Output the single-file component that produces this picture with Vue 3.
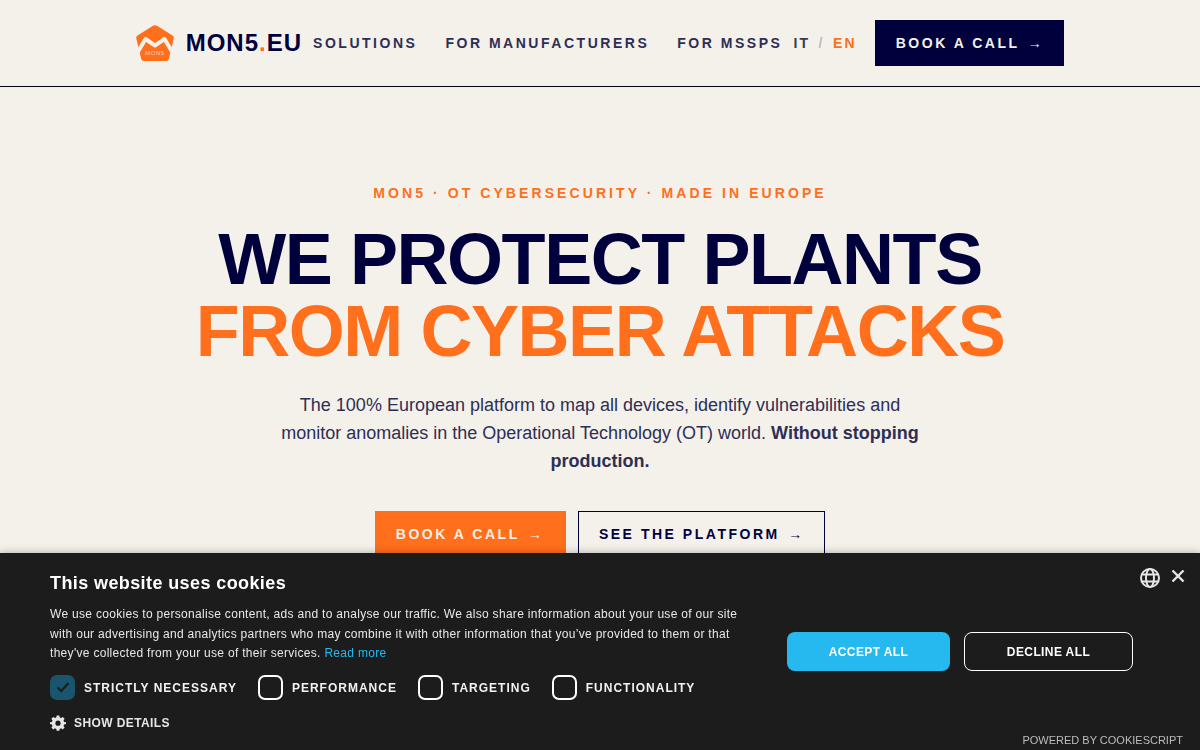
<script setup>
const navLinks = ["Solutions", "For manufacturers", "For MSSPs"];
const categories = [
  { label: "Strictly necessary", checked: true },
  { label: "Performance", checked: false },
  { label: "Targeting", checked: false },
  { label: "Functionality", checked: false },
];
</script>

<template>
  <div class="page">
    <header class="header">
      <a class="logo">
        <svg class="logo_icon" width="38" height="38" viewBox="0 0 38 38">
          <path d="M17 1.8 Q19 0.6 21 1.8 L36.5 11.5 Q38.2 12.6 37.7 14.6 L32.8 35 Q32.3 37 30.3 37 L7.7 37 Q5.7 37 5.2 35 L0.3 14.6 Q-0.2 12.6 1.5 11.5 Z" fill="#ff6f1c" />
          <path d="M0 31 L9.5 15 L19 21.5 L28.5 15 L38 31" fill="none" stroke="#f4f1ea" stroke-width="4" stroke-linejoin="round" />
          <text x="19" y="31" text-anchor="middle" class="logo_mini">MON5</text>
        </svg>
        <span class="logo_text">MON5<span class="dot">.</span>EU</span>
      </a>
      <nav class="nav">
        <a v-for="link in navLinks" :key="link" class="nav_link">{{ link }}</a>
      </nav>
      <div class="lang">
        <span>IT</span><span class="slash">/</span><span class="active">EN</span>
      </div>
      <a class="btn btn_dark btn_header">Book a call <span class="arrow">→</span></a>
    </header>

    <main class="hero">
      <p class="eyebrow">MON5 · OT Cybersecurity · Made in Europe</p>
      <h1 class="title">We protect plants<br /><span class="accent">from cyber attacks</span></h1>
      <p class="lead">
        The 100% European platform to map all devices, identify vulnerabilities and monitor
        anomalies in the Operational Technology (OT) world.
        <strong>Without stopping production.</strong>
      </p>
      <div class="actions">
        <a class="btn btn_orange">Book a call <span class="arrow">→</span></a>
        <a class="btn btn_outline">See the platform <span class="arrow">→</span></a>
      </div>
    </main>

    <section class="cookie">
      <div class="cookie_tools">
        <svg width="22" height="22" viewBox="0 0 22 22" fill="none" stroke="#e6e6e6" stroke-width="2">
          <circle cx="11" cy="11" r="9" />
          <ellipse cx="11" cy="11" rx="4" ry="9" />
          <path d="M2.8 7.6 H19.2 M2.8 14.4 H19.2" />
        </svg>
        <svg class="close" width="14" height="14" viewBox="0 0 14 14" stroke="#e6e6e6" stroke-width="2.4">
          <path d="M1.5 1.5 L12.5 12.5 M12.5 1.5 L1.5 12.5" />
        </svg>
      </div>
      <div class="cookie_main">
        <h2 class="cookie_title">This website uses cookies</h2>
        <p class="cookie_text">
          We use cookies to personalise content, ads and to analyse our traffic. We also share
          information about your use of our site with our advertising and analytics partners who may
          combine it with other information that you’ve provided to them or that they've collected
          from your use of their services. <a class="read_more">Read more</a>
        </p>
        <div class="cookie_checks">
          <label v-for="c in categories" :key="c.label" class="check">
            <span class="box" :class="{ checked: c.checked }">
              <svg v-if="c.checked" width="16" height="16" viewBox="0 0 16 16" fill="none" stroke="#1c1c1c" stroke-width="2.2">
                <path d="M2.5 8.5 L6.2 12 L13.5 4" />
              </svg>
            </span>
            <span class="check_label">{{ c.label }}</span>
          </label>
        </div>
        <a class="details">
          <svg width="16" height="16" viewBox="0 0 16 16" fill="#e6e6e6">
            <path fill-rule="evenodd" d="M6.7 0.5 H9.3 L9.7 2.5 L11.1 3.1 L12.8 2 L14.6 3.8 L13.5 5.5 L14.1 6.9 L16 7.3 V9.1 L14.1 9.5 L13.5 10.9 L14.6 12.6 L12.8 14.4 L11.1 13.3 L9.7 13.9 L9.3 15.8 H6.7 L6.3 13.9 L4.9 13.3 L3.2 14.4 L1.4 12.6 L2.5 10.9 L1.9 9.5 L0 9.1 V7.3 L1.9 6.9 L2.5 5.5 L1.4 3.8 L3.2 2 L4.9 3.1 L6.3 2.5 Z M8 5.6 A2.6 2.6 0 1 0 8 10.8 A2.6 2.6 0 1 0 8 5.6 Z" />
          </svg>
          Show details
        </a>
      </div>
      <div class="cookie_buttons">
        <button class="cookie_btn accept">Accept all</button>
        <button class="cookie_btn decline">Decline all</button>
      </div>
      <a class="powered">Powered by CookieScript</a>
    </section>
  </div>
</template>

<style>
html,
body {
  margin: 0;
  background: #f4f1ea;
  overflow: hidden;
}
</style>

<style scoped>
.page {
  height: 750px;
  overflow: hidden;
  font-family: "Liberation Sans", Arial, sans-serif;
  color: #00003d;
}
.header {
  height: 86px;
  border-bottom: 1px solid #00001a;
  display: flex;
  align-items: center;
  justify-content: center;
}
.logo {
  display: flex;
  align-items: center;
  gap: 12px;
}
.logo_icon {
  display: block;
}
.logo_mini {
  font-family: "Liberation Sans", Arial, sans-serif;
  font-size: 6px;
  letter-spacing: 0.5px;
  fill: #fbd9c2;
}
.logo_text {
  font-size: 24px;
  font-weight: 700;
  letter-spacing: 1px;
  color: #00003d;
}
.dot {
  color: #ff6f1c;
}
.nav {
  display: flex;
  gap: 28px;
  margin-left: 11px;
}
.nav_link {
  font-size: 14px;
  font-weight: 700;
  letter-spacing: 2.52px;
  text-transform: uppercase;
  color: #2e2e55;
}
.lang {
  display: flex;
  gap: 8.5px;
  margin-left: 11px;
  font-size: 14px;
  font-weight: 700;
  letter-spacing: 2.1px;
  color: #3a3a4a;
}
.slash {
  color: #bdbbb8;
}
.active {
  color: #ff6f1c;
}
.btn {
  display: inline-block;
  box-sizing: border-box;
  font-weight: 700;
  font-size: 14px;
  line-height: 16px;
  letter-spacing: 2.52px;
  text-transform: uppercase;
}
.arrow {
  margin-left: 2px;
  line-height: 0;
}
.btn_dark {
  background: #00003d;
  color: #f4f1ea;
}
.btn_header {
  margin-left: 18px;
  padding: 15px 20px 15px 21px;
}
.hero {
  padding-top: 98px;
  text-align: center;
}
.eyebrow {
  margin: 0;
  font-size: 14px;
  line-height: 17px;
  font-weight: 700;
  letter-spacing: 3.08px;
  text-transform: uppercase;
  color: #ff6f1c;
}
.title {
  margin: 21px 0 0;
  font-size: 72px;
  line-height: 72px;
  font-weight: 700;
  letter-spacing: -1.44px;
  text-transform: uppercase;
  color: #00003d;
}
.accent {
  color: #ff6f1c;
}
.lead {
  width: 650px;
  margin: 24px auto 0;
  font-size: 18px;
  line-height: 28px;
  color: #2e2e55;
}
.actions {
  display: flex;
  justify-content: center;
  gap: 12px;
  margin-top: 36px;
}
.actions .btn {
  padding: 15px 21.5px 15px 21px;
}
.btn_orange {
  background: #ff6f1c;
  color: #f4f1ea;
}
.actions .btn_outline {
  border: 1px solid #00003d;
  padding: 14px 19.5px 14px 20px;
  color: #00003d;
}
.cookie {
  position: fixed;
  left: 0;
  right: 0;
  bottom: 0;
  height: 197px;
  box-sizing: border-box;
  padding: 19px 67px 0 50px;
  background: #1c1c1c;
  box-shadow: 0 0 8px rgba(0, 0, 0, 0.3);
  display: flex;
  justify-content: space-between;
  font-family: "Liberation Sans", Arial, sans-serif;
  color: #fff;
}
.cookie_tools {
  position: absolute;
  top: 14px;
  right: 15px;
  display: flex;
  align-items: center;
  gap: 10px;
}
.close {
  margin-bottom: 4px;
}
.cookie_main {
  width: 700px;
}
.cookie_title {
  margin: 0;
  font-size: 18px;
  line-height: 22px;
  font-weight: 700;
  letter-spacing: 0.4px;
  color: #fff;
}
.cookie_text {
  margin: 11px 0 0;
  font-size: 12px;
  line-height: 19.5px;
  letter-spacing: 0.3px;
  color: #e8e8e8;
}
.read_more {
  color: #25b9f0;
}
.cookie_checks {
  display: flex;
  gap: 21px;
  margin-top: 11px;
}
.check {
  display: flex;
  align-items: center;
  gap: 9px;
  font-size: 12px;
  font-weight: 700;
  letter-spacing: 1px;
  text-transform: uppercase;
  color: #f2f2f2;
}
.check_label {
  padding-top: 2px;
}
.box {
  width: 25px;
  height: 25px;
  box-sizing: border-box;
  border: 2px solid #fff;
  border-radius: 7px;
  display: flex;
  align-items: center;
  justify-content: center;
}
.box.checked {
  background: #1a5570;
  border-color: #1a5570;
}
.details {
  display: flex;
  align-items: center;
  gap: 8px;
  margin-top: 15px;
  font-size: 12px;
  font-weight: 700;
  letter-spacing: 0.4px;
  text-transform: uppercase;
  color: #e6e6e6;
}
.cookie_buttons {
  display: flex;
  gap: 14px;
  margin-top: 60px;
  align-items: flex-start;
}
.cookie_btn {
  height: 39px;
  border-radius: 8px;
  font-family: inherit;
  font-size: 12px;
  font-weight: 700;
  letter-spacing: 0.4px;
  text-transform: uppercase;
  color: #fff;
}
.accept {
  width: 163px;
  background: #25b9f0;
  border: 0;
}
.decline {
  width: 169px;
  background: transparent;
  border: 1px solid #fff;
}
.powered {
  position: absolute;
  right: 17px;
  bottom: 3px;
  font-size: 11px;
  line-height: 14px;
  text-transform: uppercase;
  color: #bdbdbd;
}
</style>
